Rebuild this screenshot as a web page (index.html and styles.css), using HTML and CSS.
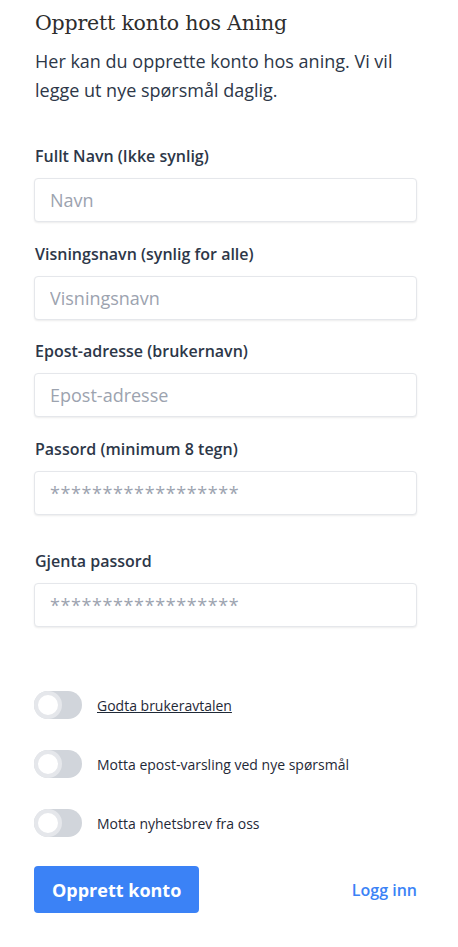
FILE: index.html
```html
<!DOCTYPE html>
<html lang="no">
<head>
<meta charset="utf-8">
<link rel="stylesheet" href="styles.css">
</head>
<body>
<main class="page">
  <h1 class="title">Opprett konto hos Aning</h1>
  <p class="intro">Her kan du opprette konto hos aning. Vi vil legge ut nye spørsmål daglig.</p>

  <form class="form">
    <div class="field">
      <label class="label">Fullt Navn (Ikke synlig)</label>
      <input class="input" type="text" placeholder="Navn">
    </div>
    <div class="field">
      <label class="label">Visningsnavn (synlig for alle)</label>
      <input class="input" type="text" placeholder="Visningsnavn">
    </div>
    <div class="field">
      <label class="label">Epost-adresse (brukernavn)</label>
      <input class="input" type="text" placeholder="Epost-adresse">
    </div>
    <div class="field">
      <label class="label">Passord (minimum 8 tegn)</label>
      <input class="input input-pw" type="text" placeholder="******************">
    </div>
    <div class="field field-gap">
      <label class="label">Gjenta passord</label>
      <input class="input input-pw" type="text" placeholder="******************">
    </div>

    <div class="toggles">
      <div class="toggle-row">
        <span class="toggle"><span class="knob"></span></span>
        <a class="toggle-text link" href="#">Godta brukeravtalen</a>
      </div>
      <div class="toggle-row">
        <span class="toggle"><span class="knob"></span></span>
        <span class="toggle-text">Motta epost-varsling ved nye spørsmål</span>
      </div>
      <div class="toggle-row">
        <span class="toggle"><span class="knob"></span></span>
        <span class="toggle-text">Motta nyhetsbrev fra oss</span>
      </div>
    </div>

    <div class="actions">
      <button class="btn" type="button">Opprett konto</button>
      <a class="login" href="#">Logg inn</a>
    </div>
  </form>
</main>
</body>
</html>
```
FILE: styles.css
```css
* { box-sizing: border-box; }
html, body { margin: 0; padding: 0; background: #fff; }
body { font-family: "Open Sans", "Noto Sans", sans-serif; color: #2d3748; }
.page { padding: 9px 41px 0 34px; }
.title {
  font-family: "DejaVu Serif", "Liberation Serif", serif;
  font-weight: 400;
  font-size: 20.5px;
  line-height: 28px;
  margin: 0 0 10px 1px;
  color: #2d2d2d;
  letter-spacing: -0.2px;
}
.intro {
  font-size: 18px;
  line-height: 29px;
  margin: 0 0 39px 1px;
  color: #2d3748;
}
.form { display: flex; flex-direction: column; }
.field { display: flex; flex-direction: column; margin-bottom: 19.7px; }
.field-gap { margin-top: 14px; }
.label {
  font-size: 16px;
  font-weight: 600;
  line-height: 24px;
  margin: 0 0 10px 1px;
  color: #2d3748;
}
.input {
  height: 44px;
  width: 100%;
  border: 1px solid #e5e7eb;
  border-radius: 4px;
  box-shadow: 0 1px 2px rgba(0,0,0,0.08);
  padding: 0 15px;
  font-family: "Open Sans", sans-serif;
  font-size: 18px;
  color: #2d3748;
  outline: none;
}
.input-pw { letter-spacing: 0.6px; }
.input::placeholder { color: #9ca3af; }
.toggles { display: flex; flex-direction: column; gap: 31px; margin-top: 45px; }
.toggle-row { display: flex; align-items: center; gap: 15px; height: 28px; }
.toggle {
  position: relative;
  width: 48px;
  height: 28px;
  border-radius: 14px;
  background: #d1d5db;
  flex: none;
}
.knob {
  position: absolute;
  left: 0; top: 0;
  width: 28px; height: 28px;
  border-radius: 50%;
  background: #fff;
  border: 4px solid #e5e7eb;
}
.toggle-text { font-size: 14px; color: #1f2937; }
.link { color: #1f2937; text-decoration: underline; }
.actions {
  display: flex;
  align-items: center;
  justify-content: space-between;
  margin-top: 29px;
}
.btn {
  background: #3b82f6;
  color: #fff;
  border: none;
  border-radius: 4px;
  height: 47px;
  padding: 0 18px;
  font-family: "Open Sans", sans-serif;
  font-size: 18px;
  font-weight: 700;
}
.login {
  color: #3b82f6;
  font-size: 16px;
  font-weight: 600;
  text-decoration: none;
}
```
